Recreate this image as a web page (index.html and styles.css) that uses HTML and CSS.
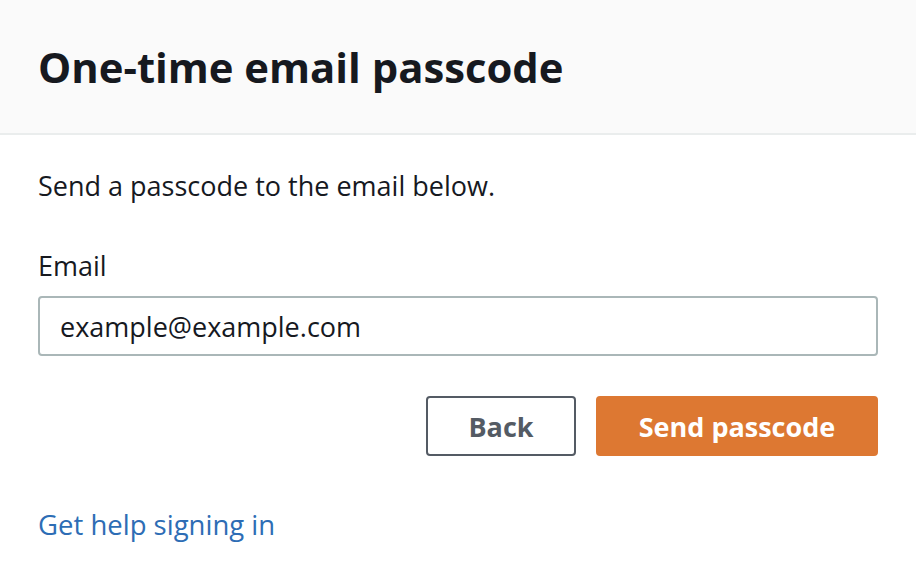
FILE: index.html
```html
<!DOCTYPE html>
<html lang="en">
<head>
<meta charset="utf-8">
<title>One-time email passcode</title>
<link rel="stylesheet" href="styles.css">
</head>
<body>
<div class="card">
  <header class="card-header">
    <h1 class="title">One-time email passcode</h1>
  </header>
  <main class="card-body">
    <p class="intro">Send a passcode to the email below.</p>
    <label class="field-label" for="email">Email</label>
    <input class="field-input" id="email" type="text" value="example@example.com">
    <div class="actions">
      <button class="btn btn-secondary" type="button">Back</button>
      <button class="btn btn-primary" type="button">Send passcode</button>
    </div>
    <a class="help-link" href="#">Get help signing in</a>
  </main>
</div>
</body>
</html>
```
FILE: styles.css
```css
html, body {
  margin: 0;
  padding: 0;
  background: #ffffff;
}
body {
  font-family: "Open Sans", "Noto Sans", sans-serif;
  color: #16191f;
}
.card {
  width: 916px;
  height: 582px;
  overflow: hidden;
}
.card-header {
  background: #fafafa;
  border-bottom: 2px solid #eaeded;
  height: 135px;
  box-sizing: border-box;
  padding: 0 38px;
  display: flex;
  align-items: center;
}
.title {
  margin: 0;
  font-size: 41.8px;
  font-weight: 700;
  color: #16191f;
}
.card-body {
  padding: 0 38px;
  display: flex;
  flex-direction: column;
}
.intro {
  margin: 35px 0 0;
  font-size: 27px;
  line-height: 32px;
}
.field-label {
  margin-top: 48px;
  font-size: 27px;
  line-height: 32px;
}
.field-input {
  margin-top: 14px;
  height: 60px;
  box-sizing: border-box;
  border: 2px solid #aab7b8;
  border-radius: 4px;
  padding: 0 20px;
  font-family: inherit;
  font-size: 27px;
  color: #16191f;
  outline: none;
}
.actions {
  margin-top: 40px;
  display: flex;
  justify-content: flex-end;
  gap: 20px;
}
.btn {
  height: 60px;
  box-sizing: border-box;
  border-radius: 4px;
  font-family: inherit;
  font-size: 27px;
  font-weight: 700;
  cursor: pointer;
  padding: 0;
}
.btn-secondary {
  width: 150px;
  background: #ffffff;
  border: 2px solid #545b64;
  color: #545b64;
}
.btn-primary {
  width: 282px;
  background: #dd7832;
  border: 2px solid #dd7832;
  color: #ffffff;
}
.help-link {
  margin-top: 53px;
  font-size: 27.5px;
  line-height: 32px;
  color: #2d6db5;
  text-decoration: none;
  align-self: flex-start;
}
```
